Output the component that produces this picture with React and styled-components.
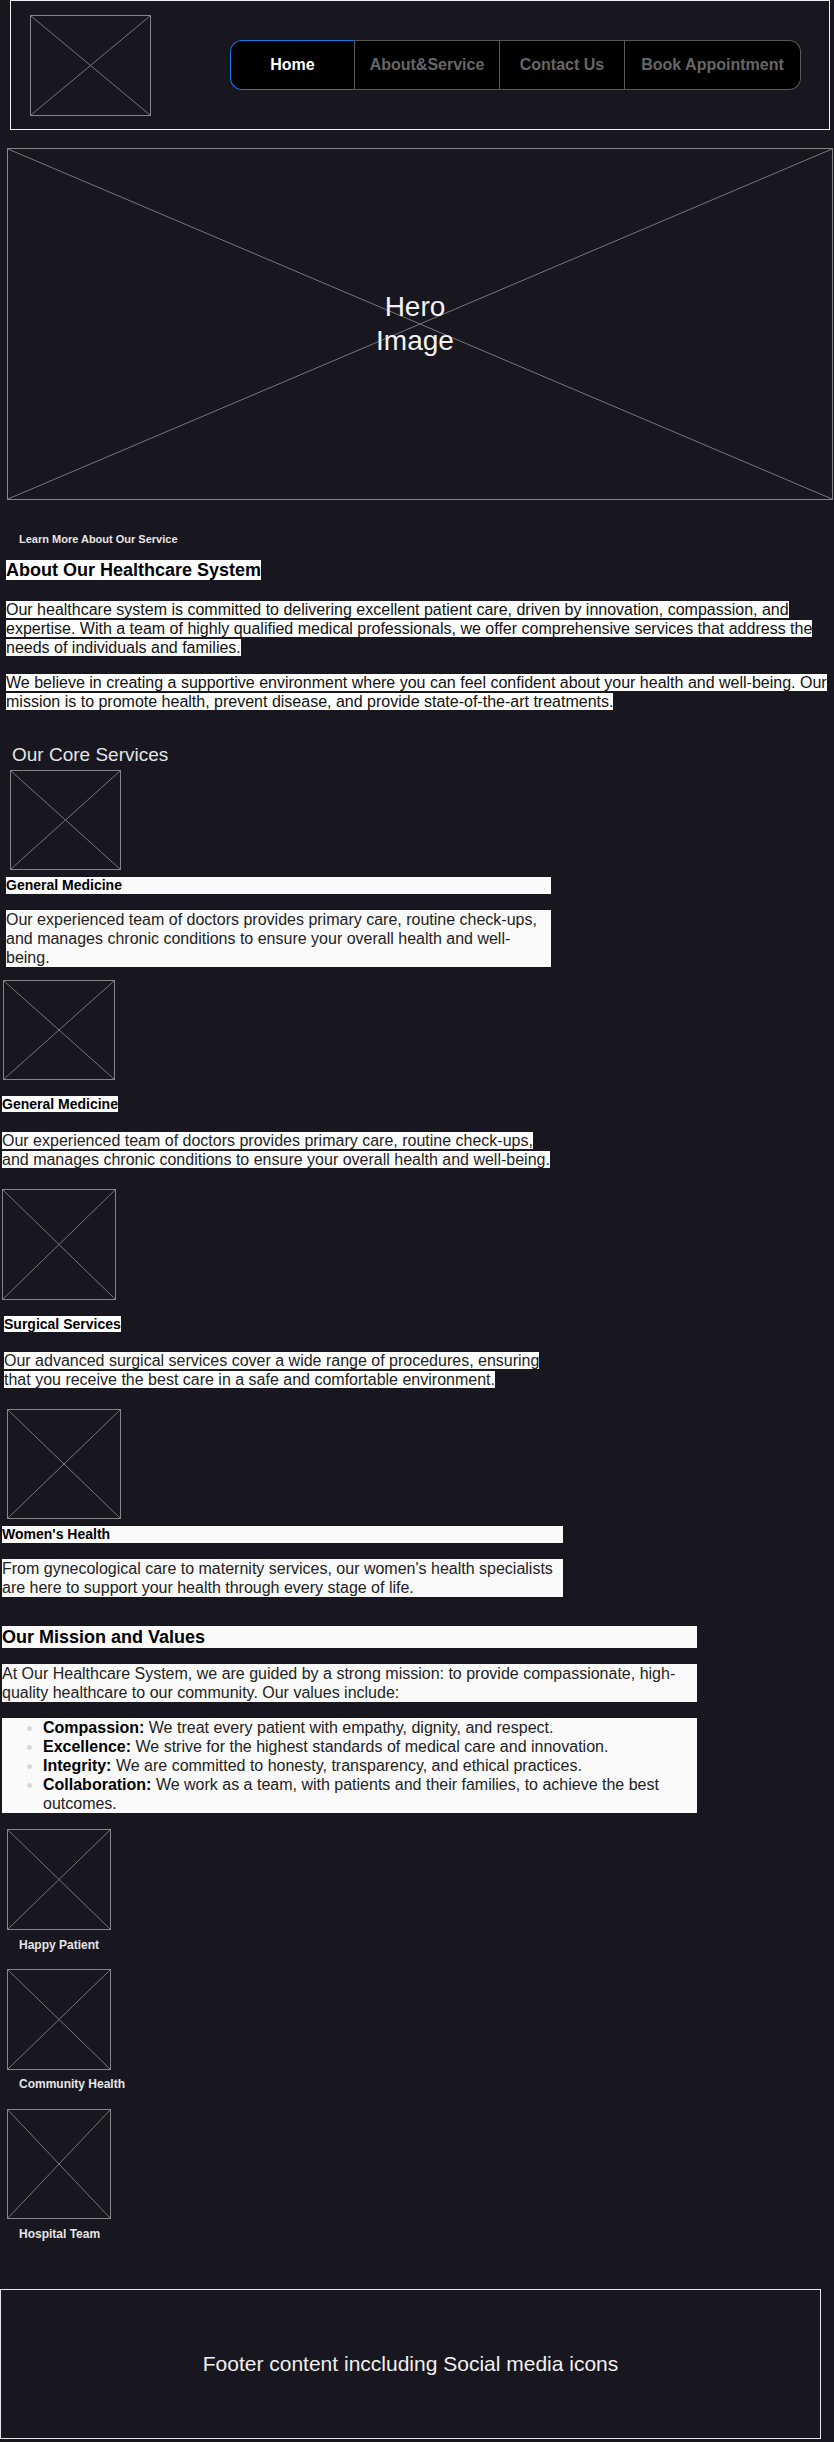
import React from 'react';
import styled, { createGlobalStyle } from 'styled-components';

const GlobalStyle = createGlobalStyle`
  body {
    margin: 0;
    background-color: #18161f;
    font-family: "Liberation Sans", Arial, sans-serif;
  }
  * {
    box-sizing: border-box;
  }
`;

const navLinks = [
  { label: 'Home', width: 125, active: true },
  { label: 'About&Service', width: 145 },
  { label: 'Contact Us', width: 125 },
  { label: 'Book Appointment', width: 176 },
];

const services = [
  {
    title: 'General Medicine',
    text: 'Our experienced team of doctors provides primary care, routine check-ups, and manages chronic conditions to ensure your overall health and well-being.',
    img: { x: 10, w: 111, h: 100, top: 4 },
    x: 6, width: 545, block: true, gap: 0,
  },
  {
    title: 'General Medicine',
    text: 'Our experienced team of doctors provides primary care, routine check-ups, and manages chronic conditions to ensure your overall health and well-being.',
    img: { x: 3, w: 112, h: 100, top: 13 },
    x: 2, width: 555, block: false,
  },
  {
    title: 'Surgical Services',
    text: 'Our advanced surgical services cover a wide range of procedures, ensuring that you receive the best care in a safe and comfortable environment.',
    img: { x: 2, w: 114, h: 111, top: 20 },
    x: 4, width: 545, block: false,
  },
  {
    title: "Women's Health",
    text: "From gynecological care to maternity services, our women's health specialists are here to support your health through every stage of life.",
    img: { x: 7, w: 114, h: 110, top: 20 },
    x: 2, width: 561, block: true,
  },
];

const values = [
  { name: 'Compassion:', text: 'We treat every patient with empathy, dignity, and respect.' },
  { name: 'Excellence:', text: 'We strive for the highest standards of medical care and innovation.' },
  { name: 'Integrity:', text: 'We are committed to honesty, transparency, and ethical practices.' },
  { name: 'Collaboration:', text: 'We work as a team, with patients and their families, to achieve the best outcomes.' },
];

const gallery = [
  { caption: 'Happy Patient', h: 101, top: 16, capTop: 8 },
  { caption: 'Community Health', h: 101, top: 17, capTop: 7 },
  { caption: 'Hospital Team', h: 110, top: 18, capTop: 8 },
];

const Placeholder = ({ w, h, x = 0, top = 0 }) => (
  <Frame $w={w} $h={h} $x={x} $top={top}>
    <svg width="100%" height="100%" viewBox="0 0 100 100" preserveAspectRatio="none">
      <line x1="0" y1="0" x2="100" y2="100" stroke="#777" strokeWidth="1" vectorEffect="non-scaling-stroke" />
      <line x1="100" y1="0" x2="0" y2="100" stroke="#777" strokeWidth="1" vectorEffect="non-scaling-stroke" />
    </svg>
  </Frame>
);

const App = () => {
  return (
    <Page>
      <GlobalStyle />
      <Header>
        <Placeholder w={121} h={101} />
        <Nav>
          {navLinks.map((link) => (
            <NavItem key={link.label} $width={link.width} $active={link.active}>
              {link.label}
            </NavItem>
          ))}
        </Nav>
      </Header>

      <Hero>
        <HeroLines viewBox="0 0 100 100" preserveAspectRatio="none">
          <line x1="0" y1="0" x2="100" y2="100" stroke="#777" strokeWidth="1" vectorEffect="non-scaling-stroke" />
          <line x1="100" y1="0" x2="0" y2="100" stroke="#777" strokeWidth="1" vectorEffect="non-scaling-stroke" />
        </HeroLines>
        <HeroText>Hero Image</HeroText>
      </Hero>

      <LearnLink href="#">Learn More About Our Service</LearnLink>

      <About>
        <AboutTitle><Mark>About Our Healthcare System</Mark></AboutTitle>
        <AboutText $top={19}>
          <Mark>
            Our healthcare system is committed to delivering excellent patient care, driven by innovation, compassion, and expertise. With a team of highly qualified medical professionals, we offer comprehensive services that address the needs of individuals and families.
          </Mark>
        </AboutText>
        <AboutText $top={16}>
          <Mark>
            We believe in creating a supportive environment where you can feel confident about your health and well-being. Our mission is to promote health, prevent disease, and provide state-of-the-art treatments.
          </Mark>
        </AboutText>
      </About>

      <ServicesTitle>Our Core Services</ServicesTitle>
      {services.map((s, i) => (
        <ServiceCard key={i}>
          <Placeholder w={s.img.w} h={s.img.h} x={s.img.x} top={s.img.top} />
          <ServiceName $x={s.x} $width={s.width} $block={s.block}>
            {s.block ? s.title : <Mark>{s.title}</Mark>}
          </ServiceName>
          <ServiceText $x={s.x} $width={s.width} $block={s.block}>
            {s.block ? s.text : <Mark>{s.text}</Mark>}
          </ServiceText>
        </ServiceCard>
      ))}

      <Mission>
        <MissionTitle>Our Mission and Values</MissionTitle>
        <MissionText>
          At Our Healthcare System, we are guided by a strong mission: to provide compassionate, high-quality healthcare to our community. Our values include:
        </MissionText>
        <ValueList>
          {values.map((v) => (
            <li key={v.name}>
              <strong>{v.name}</strong> {v.text}
            </li>
          ))}
        </ValueList>
      </Mission>

      <Gallery>
        {gallery.map((g) => (
          <Figure key={g.caption} $top={g.top}>
            <Placeholder w={104} h={g.h} />
            <Caption $top={g.capTop}>{g.caption}</Caption>
          </Figure>
        ))}
      </Gallery>

      <Footer>
        <FooterText>Footer content inccluding Social media icons</FooterText>
      </Footer>
    </Page>
  );
};

export default App;

const Page = styled.div`
  width: 834px;
  padding-bottom: 2px;
  overflow: hidden;
`;

const Frame = styled.div`
  width: ${(p) => p.$w}px;
  height: ${(p) => p.$h}px;
  margin-left: ${(p) => p.$x}px;
  margin-top: ${(p) => p.$top}px;
  border: 1px solid #858585;
  flex-shrink: 0;

  svg {
    display: block;
  }
`;

const Header = styled.header`
  margin-left: 10px;
  width: 820px;
  height: 130px;
  border: 1px solid #f0f0f0;
  display: flex;
  align-items: center;
  justify-content: space-between;
  padding: 0 28px 0 19px;
`;

const Nav = styled.nav`
  display: flex;
  height: 50px;
`;

const NavItem = styled.a`
  width: ${(p) => p.$width}px;
  display: flex;
  align-items: center;
  justify-content: center;
  background-color: #000;
  color: ${(p) => (p.$active ? '#ffffff' : '#666666')};
  font-size: 16px;
  font-weight: bold;
  white-space: nowrap;
  border-top: 1px solid ${(p) => (p.$active ? '#1479ea' : '#5a5a5a')};
  border-bottom: 1px solid ${(p) => (p.$active ? '#1479ea' : '#5a5a5a')};
  border-right: 1px solid #5a5a5a;
  cursor: pointer;

  &:first-child {
    border-left: 1px solid #1479ea;
    border-radius: 12px 0 0 12px;
  }

  &:last-child {
    border-radius: 0 12px 12px 0;
  }
`;

const Hero = styled.section`
  position: relative;
  margin: 18px 0 0 7px;
  width: 826px;
  height: 352px;
  border: 1px solid #858585;
  display: flex;
  align-items: center;
  justify-content: center;
`;

const HeroLines = styled.svg`
  position: absolute;
  inset: 0;
  width: 100%;
  height: 100%;
`;

const HeroText = styled.h1`
  position: relative;
  margin: 0 10px 0 0;
  width: 90px;
  text-align: center;
  font-size: 28px;
  line-height: 34px;
  font-weight: normal;
  color: #f2f2f2;
`;

const LearnLink = styled.a`
  display: block;
  margin: 32px 0 0 19px;
  font-size: 11px;
  line-height: 14px;
  font-weight: bold;
  color: #e6e6e6;
  text-decoration: none;
`;

const Mark = styled.span`
  background-color: #ffffff;
`;

const About = styled.section`
  padding: 0 4px 0 6px;
`;

const AboutTitle = styled.h2`
  margin: 14px 0 0;
  font-size: 18px;
  line-height: 21px;
  color: #000;
`;

const AboutText = styled.p`
  margin: ${(p) => p.$top}px 0 0;
  font-size: 16px;
  line-height: 19px;
  color: #111;
`;

const ServicesTitle = styled.h2`
  margin: 33px 0 0 12px;
  font-size: 19px;
  line-height: 22px;
  font-weight: normal;
  color: #e4e4e4;
`;

const ServiceCard = styled.article`
  display: flex;
  flex-direction: column;
  align-items: flex-start;
`;

const ServiceName = styled.h3`
  margin: ${(p) => (p.$block ? 7 : 16)}px 0 0 ${(p) => p.$x}px;
  width: ${(p) => p.$width}px;
  font-size: 14px;
  line-height: 17px;
  font-weight: bold;
  color: #000;
  background-color: ${(p) => (p.$block ? '#fafafa' : 'transparent')};
`;

const ServiceText = styled.p`
  margin: ${(p) => (p.$block ? 16 : 18)}px 0 0 ${(p) => p.$x}px;
  width: ${(p) => p.$width}px;
  font-size: 16px;
  line-height: 19px;
  color: #222;
  background-color: ${(p) => (p.$block ? '#fafafa' : 'transparent')};
`;

const Mission = styled.section`
  margin: 29px 0 0 2px;
  width: 695px;
`;

const MissionTitle = styled.h2`
  margin: 0;
  font-size: 18px;
  line-height: 22px;
  color: #000;
  background-color: #fafafa;
`;

const MissionText = styled.p`
  margin: 16px 0 0;
  font-size: 16px;
  line-height: 19px;
  color: #222;
  background-color: #fafafa;
`;

const ValueList = styled.ul`
  margin: 16px 0 0;
  padding-left: 41px;
  font-size: 16px;
  line-height: 19px;
  color: #222;
  background-color: #fafafa;

  li::marker {
    color: #d8d8d8;
  }

  strong {
    color: #000;
  }
`;

const Gallery = styled.section`
  display: flex;
  flex-direction: column;
  padding-left: 7px;
`;

const Figure = styled.figure`
  margin: ${(p) => p.$top}px 0 0;
`;

const Caption = styled.figcaption`
  margin-top: ${(p) => p.$top}px;
  padding-left: 12px;
  font-size: 12px;
  line-height: 14px;
  font-weight: bold;
  color: #e6e6e6;
`;

const Footer = styled.footer`
  margin-top: 48px;
  width: 821px;
  height: 150px;
  border: 1px solid #e6e6e6;
  display: flex;
  align-items: center;
  justify-content: center;
`;

const FooterText = styled.p`
  margin: 0;
  font-size: 21px;
  color: #f0f0f0;
`;
